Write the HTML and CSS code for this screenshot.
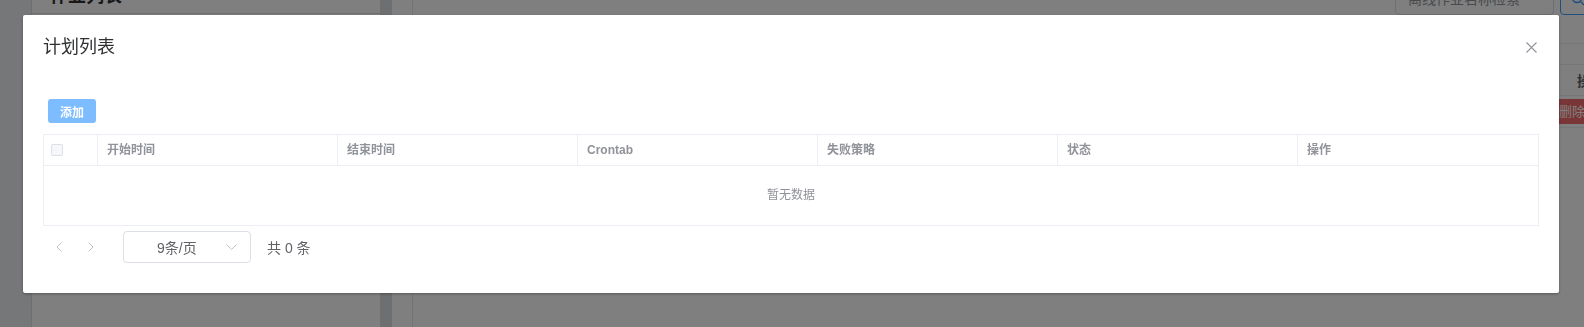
FILE: index.html
```html
<!DOCTYPE html>
<html lang="zh-CN">
<head>
    <meta charset="UTF-8">
    <meta name="viewport" content="width=device-width, initial-scale=1.0">
    <title>计划列表</title>
    <link rel="stylesheet" href="styles.css">
</head>
<body>
    <div class="page">
        <div class="rail"></div>
        <aside class="side">
            <div class="side-head"><h2>作业列表</h2></div>
        </aside>
        <div class="band"></div>
        <main class="main">
            <div class="content">
                <div class="toolbar">
                    <div class="search">离线作业名称检索</div>
                    <div class="search-btn">
                        <svg width="14" height="14" viewBox="0 0 14 14"><circle cx="6" cy="6" r="4.5" fill="none" stroke="#409eff" stroke-width="1.4"/><path d="M9.3 9.3 L13 13" stroke="#409eff" stroke-width="1.4"/></svg>
                    </div>
                </div>
                <div class="bg-tabs"></div>
                <div class="bg-filter"></div>
                <div class="bg-row bg-thead"><span class="bg-cell">操作</span></div>
                <div class="bg-row bg-tbody"><span class="bg-cell"><span class="bg-del">删除</span></span></div>
            </div>
        </main>
    </div>

    <div class="mask"></div>

    <div class="dialog-wrap">
        <div class="dialog">
            <div class="dialog-header">
                <span class="dialog-title">计划列表</span>
                <span class="dialog-close">
                    <svg width="11" height="11" viewBox="0 0 11 11"><path d="M0.5 0.5 L10.5 10.5 M10.5 0.5 L0.5 10.5" stroke="#909399" stroke-width="1.1"/></svg>
                </span>
            </div>
            <div class="dialog-body">
                <button class="btn-add">添加</button>

                <div class="table">
                    <div class="th th-check"><span class="checkbox"></span></div>
                    <div class="th">开始时间</div>
                    <div class="th">结束时间</div>
                    <div class="th">Crontab</div>
                    <div class="th">失败策略</div>
                    <div class="th">状态</div>
                    <div class="th th-last">操作</div>
                    <div class="empty">暂无数据</div>
                </div>

                <div class="pagination">
                    <span class="pg-btn">
                        <svg width="6" height="10" viewBox="0 0 6 10"><path d="M5.5 0.5 L1 5 L5.5 9.5" fill="none" stroke="#c0c4cc" stroke-width="1"/></svg>
                    </span>
                    <span class="pg-btn">
                        <svg width="6" height="10" viewBox="0 0 6 10"><path d="M0.5 0.5 L5 5 L0.5 9.5" fill="none" stroke="#c0c4cc" stroke-width="1"/></svg>
                    </span>
                    <div class="sizes">
                        <span>9条/页</span>
                        <svg width="11" height="6" viewBox="0 0 11 6"><path d="M0.5 0.5 L5.5 5.5 L10.5 0.5" fill="none" stroke="#c0c4cc" stroke-width="1"/></svg>
                    </div>
                    <span class="total">共 0 条</span>
                </div>
            </div>
        </div>
    </div>
</body>
</html>
```

FILE: styles.css
```css
body {
    margin: 0;
    height: 100vh;
    overflow: hidden;
    font-family: "Liberation Sans", "Noto Sans CJK SC", sans-serif;
    background: #ffffff;
}

/* page behind the modal */
.page {
    display: flex;
    height: 360px;
    margin-top: -20px;
}

.rail {
    width: 31px;
    background: #eceef1;
}

.side {
    width: 348px;
    background: #ffffff;
    border-left: 1px solid #dcdfe6;
}

.side-head {
    padding: 4px 18px 5px;
    border-bottom: 1px solid #dcdfe6;
}

.side-head h2 {
    margin: 0;
    font-size: 18px;
    line-height: 24px;
    color: #303133;
}

.band {
    width: 12px;
    background: #dcdee1;
}

.main {
    flex: 1;
    padding-left: 20px;
    overflow: hidden;
}

.content {
    height: 100%;
    border-left: 1px solid #e4e7ed;
}

.toolbar {
    display: flex;
    justify-content: flex-end;
    align-items: center;
    height: 35px;
    padding-top: 3px;
    box-sizing: border-box;
    margin-right: -24px;
}

.search {
    width: 159px;
    height: 32px;
    box-sizing: border-box;
    border: 1px solid #dcdfe6;
    border-radius: 4px;
    padding-left: 12px;
    font-size: 14px;
    line-height: 30px;
    color: #909399;
    white-space: nowrap;
    overflow: hidden;
}

.search-btn {
    width: 48px;
    height: 32px;
    box-sizing: border-box;
    margin-left: 6px;
    border: 1px solid #409eff;
    border-radius: 4px;
    padding: 8px 0 0 10px;
}

.bg-tabs {
    height: 28px;
    border-bottom: 1px solid #ebeef5;
}

.bg-filter {
    height: 20px;
    border-bottom: 1px solid #ebeef5;
}

.bg-row {
    display: flex;
    justify-content: flex-end;
    border-bottom: 1px solid #ebeef5;
}

.bg-thead {
    height: 30px;
    align-items: center;
}

.bg-tbody {
    height: 31px;
    align-items: flex-start;
}

.bg-cell {
    width: 35px;
    overflow: hidden;
    white-space: nowrap;
    font-size: 14px;
    font-weight: bold;
    color: #606266;
}

.bg-thead .bg-cell {
    width: 7px;
    padding-left: 28px;
}

.bg-tbody .bg-cell {
    padding-top: 3px;
}

.bg-del {
    display: inline-block;
    padding: 0 10px;
    line-height: 25px;
    font-size: 13px;
    font-weight: normal;
    color: #ffffff;
    background: #f56c6c;
    border-radius: 3px;
}

/* modal */
.mask {
    position: fixed;
    inset: 0;
    background: rgba(0, 0, 0, 0.5);
}

.dialog-wrap {
    position: fixed;
    inset: 0;
}

.dialog {
    width: 1536px;
    margin: 15px 0 0 23px;
    background: #ffffff;
    border-radius: 2px;
    box-shadow: 0 1px 3px rgba(0, 0, 0, 0.3);
}

.dialog-header {
    display: flex;
    justify-content: space-between;
    align-items: center;
    padding: 20px 22px 10px 20px;
}

.dialog-title {
    font-size: 18px;
    line-height: 24px;
    color: #303133;
}

.dialog-close {
    display: flex;
}

.dialog-body {
    padding: 30px 20px;
}

.btn-add {
    display: block;
    height: 24px;
    padding: 0 12px;
    margin: 0 0 11px 5px;
    border: none;
    border-radius: 3px;
    background: #7dbcff;
    color: #ffffff;
    font-family: inherit;
    font-size: 12px;
    font-weight: bold;
}

.table {
    display: grid;
    grid-template-columns: 54px repeat(6, 1fr);
    border: 1px solid #ebeef5;
}

.th {
    height: 30px;
    line-height: 30px;
    padding-left: 9px;
    font-size: 12px;
    font-weight: bold;
    color: #909399;
    border-right: 1px solid #ebeef5;
    border-bottom: 1px solid #ebeef5;
}

.th-check {
    display: flex;
    align-items: center;
    padding-left: 7px;
}

.th-last {
    border-right: none;
}

.checkbox {
    width: 12px;
    height: 12px;
    box-sizing: border-box;
    border: 1px solid #dcdfe6;
    border-radius: 2px;
    background: #f5f7fa;
}

.empty {
    grid-column: 1 / -1;
    height: 59px;
    line-height: 59px;
    text-align: center;
    font-size: 12px;
    color: #909399;
}

.pagination {
    display: flex;
    align-items: center;
    padding-top: 5px;
}

.pg-btn {
    display: flex;
    justify-content: center;
    width: 30px;
    margin-right: 2px;
}

.pg-btn:first-child {
    margin-left: 1px;
}

.sizes {
    display: flex;
    justify-content: space-between;
    align-items: center;
    width: 128px;
    height: 32px;
    box-sizing: border-box;
    margin-left: 15px;
    padding: 0 13px 0 33px;
    border: 1px solid #dcdfe6;
    border-radius: 4px;
    font-size: 14px;
    color: #606266;
}

.total {
    margin-left: 16px;
    font-size: 14px;
    color: #606266;
}
```
